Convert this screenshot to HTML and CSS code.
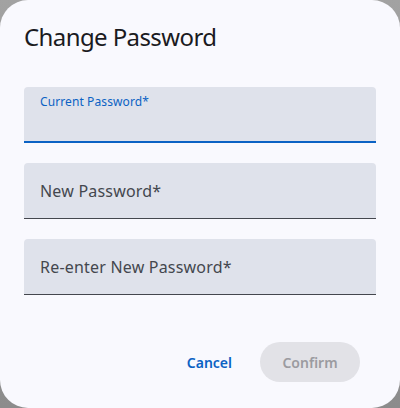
FILE: index.html
```html
<!DOCTYPE html>
<html>
<head>
<meta charset="utf-8">
<link rel="stylesheet" href="styles.css">
</head>
<body>
<div class="dialog">
  <h1 class="title">Change Password</h1>
  <div class="fields">
    <div class="field focused">
      <span class="label small">Current Password*</span>
    </div>
    <div class="field">
      <span class="label">New Password*</span>
    </div>
    <div class="field">
      <span class="label">Re-enter New Password*</span>
    </div>
  </div>
  <div class="actions">
    <button class="btn text">Cancel</button>
    <button class="btn filled" disabled>Confirm</button>
  </div>
</div>
</body>
</html>
```
FILE: styles.css
```css
html, body {
  margin: 0;
  padding: 0;
}
body {
  width: 400px;
  height: 408px;
  background: linear-gradient(#a2a2a2, #8c8c8c);
  font-family: "Noto Sans", sans-serif;
  overflow: hidden;
}
.dialog {
  box-sizing: border-box;
  width: 400px;
  height: 408px;
  background: #f9f9fe;
  border-radius: 28px;
  padding: 21px 24px 0 24px;
  display: flex;
  flex-direction: column;
}
.title {
  margin: 0;
  font-size: 24px;
  line-height: 32px;
  font-weight: 400;
  letter-spacing: -0.6px;
  color: #1b1b1f;
}
.fields {
  margin-top: 34px;
  display: flex;
  flex-direction: column;
  gap: 20px;
}
.field {
  box-sizing: border-box;
  height: 56px;
  background: #dfe2eb;
  border-radius: 4px 4px 0 0;
  border-bottom: 1px solid #44474e;
  padding: 0 16px;
  display: flex;
  align-items: center;
}
.field.focused {
  border-bottom: 2px solid #0b62c4;
  align-items: flex-start;
  padding-top: 6px;
}
.label {
  font-size: 16px;
  color: #44474e;
  letter-spacing: 0.2px;
}
.label.small {
  font-size: 12px;
  color: #0b62c4;
  letter-spacing: 0.1px;
}
.actions {
  margin-top: 47px;
  display: flex;
  justify-content: flex-end;
  align-items: center;
  gap: 16px;
  padding-right: 16px;
}
.btn {
  font-family: inherit;
  font-size: 14px;
  font-weight: 600;
  height: 40px;
  border: none;
  border-radius: 20px;
  padding: 0 12px;
  letter-spacing: 0;
}
.btn.text {
  background: transparent;
  color: #0b62c4;
}
.btn.filled {
  background: #e2e2e7;
  color: #9b9ba0;
  width: 100px;
  padding: 0;
}
```
